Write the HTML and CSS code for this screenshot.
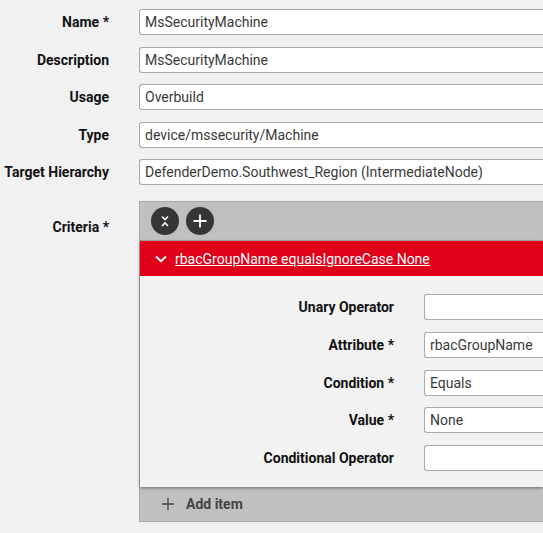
FILE: index.html
```html
<!DOCTYPE html>
<html>
<head>
<meta charset="utf-8">
<link rel="stylesheet" href="styles.css">
</head>
<body>
<div class="form">
  <label class="lbl">Name *</label>
  <div class="field">MsSecurityMachine</div>
  <label class="lbl">Description</label>
  <div class="field">MsSecurityMachine</div>
  <label class="lbl">Usage</label>
  <div class="field">Overbuild</div>
  <label class="lbl">Type</label>
  <div class="field">device/mssecurity/Machine</div>
  <label class="lbl">Target Hierarchy</label>
  <div class="field">DefenderDemo.Southwest_Region (IntermediateNode)</div>
  <label class="lbl lbl-criteria">Criteria *</label>
  <div class="criteria">
    <div class="toolbar">
      <button class="circle-btn" aria-label="Collapse all">
        <svg width="28" height="28" viewBox="0 0 28 28"><path d="M11 9.5 L14 12.5 L17 9.5 M11 19 L14 16 L17 19" fill="none" stroke="#fff" stroke-width="1.6"/></svg>
      </button>
      <button class="circle-btn" aria-label="Add">
        <svg width="28" height="28" viewBox="0 0 28 28"><path d="M14 7.5 V20.5 M7.5 14 H20.5" fill="none" stroke="#fff" stroke-width="1.8"/></svg>
      </button>
    </div>
    <div class="item">
      <div class="item-head">
        <svg class="chev" width="12" height="8" viewBox="0 0 12 8"><path d="M1 1.5 L6 6.2 L11 1.5" fill="none" stroke="#fff" stroke-width="2"/></svg>
        <a class="item-title">rbacGroupName equalsIgnoreCase None</a>
      </div>
      <div class="item-body">
        <label class="lbl">Unary Operator</label>
        <div class="field"></div>
        <label class="lbl">Attribute *</label>
        <div class="field">rbacGroupName</div>
        <label class="lbl">Condition *</label>
        <div class="field">Equals</div>
        <label class="lbl">Value *</label>
        <div class="field">None</div>
        <label class="lbl">Conditional Operator</label>
        <div class="field"></div>
      </div>
    </div>
    <div class="add-row">
      <svg width="14" height="14" viewBox="0 0 14 14"><path d="M7 1 V13 M1 7 H13" fill="none" stroke="#444" stroke-width="1.3"/></svg>
      <span>Add item</span>
    </div>
  </div>
</div>
</body>
</html>
```

FILE: styles.css
```css
html, body {
  margin: 0;
  padding: 0;
  background: #f1f1f1;
  overflow: hidden;
}
body {
  font-family: Roboto, "Liberation Sans", sans-serif;
  font-size: 14px;
  color: #111;
}
.form {
  display: grid;
  grid-template-columns: 109px minmax(0, 1fr);
  column-gap: 30px;
  row-gap: 11.5px;
  padding-top: 9px;
  align-items: center;
}
.lbl {
  text-align: right;
  font-weight: 700;
  color: #111;
  white-space: nowrap;
}
.field {
  box-sizing: border-box;
  height: 26px;
  border: 1px solid #aaa;
  border-right: none;
  border-radius: 3px 0 0 3px;
  background: #fff;
  padding: 0 5px;
  line-height: 24px;
  color: #3a3a3a;
  white-space: nowrap;
  overflow: hidden;
}
.lbl-criteria {
  align-self: start;
  padding-top: 22px;
}
.criteria {
  margin-top: 4.5px;
  background: #c0c0c0;
  border: 1px solid #aaa;
  border-right: none;
  min-width: 0;
}
.toolbar {
  display: flex;
  gap: 7px;
  height: 38px;
  align-items: center;
  padding-left: 11px;
  border-bottom: 1px solid #aaa;
}
.circle-btn {
  width: 28px;
  height: 28px;
  border-radius: 50%;
  border: none;
  padding: 0;
  background: #363636;
  display: flex;
  align-items: center;
  justify-content: center;
}
.item {
  box-shadow: 0 1px 3px rgba(0,0,0,0.45);
  position: relative;
}
.item-head {
  background: #e0001a;
  height: 35px;
  display: flex;
  align-items: center;
  padding-left: 15px;
  gap: 8px;
}
.chev {
  display: block;
}
.item-title {
  color: #fff;
  text-decoration: underline;
  white-space: nowrap;
}
.item-body {
  background: #f2f2f2;
  display: grid;
  grid-template-columns: 254px minmax(0, 1fr);
  column-gap: 30px;
  row-gap: 11.75px;
  align-items: center;
  padding: 18px 0 16px 0;
}
.add-row {
  display: flex;
  align-items: center;
  height: 34px;
  padding-left: 21px;
  gap: 11px;
  font-weight: 700;
  color: #444;
}
.add-row svg {
  display: block;
}
```
